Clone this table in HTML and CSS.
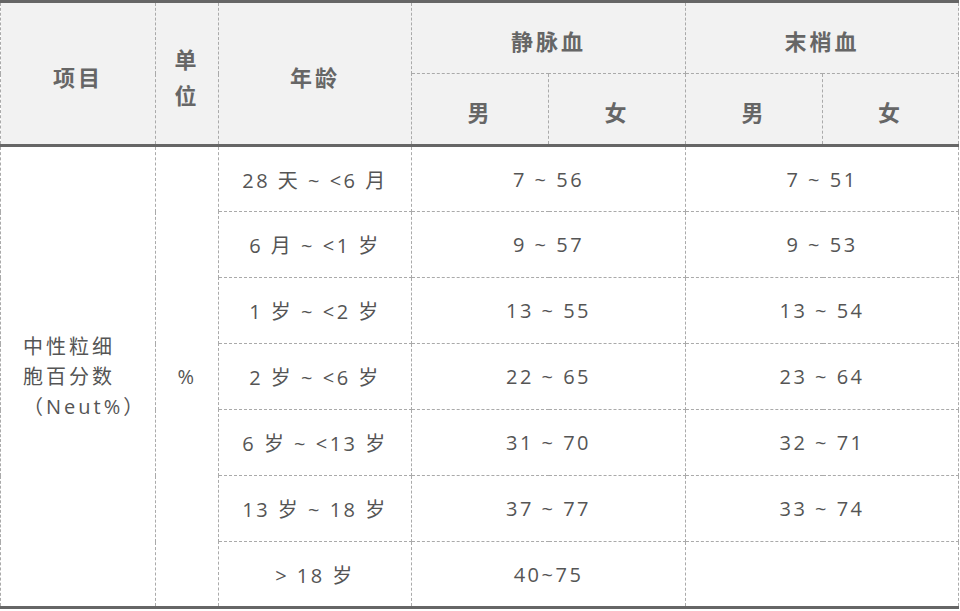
FILE: index.html
```html
<!DOCTYPE html>
<html lang="zh">
<head>
<meta charset="utf-8">
<link rel="stylesheet" href="styles.css">
</head>
<body>
<table class="ref">
  <colgroup>
    <col class="c1"><col class="c2"><col class="c3"><col class="c4"><col class="c5"><col class="c6"><col class="c7">
  </colgroup>
  <thead>
    <tr class="h1">
      <th rowspan="2">项目</th>
      <th rowspan="2" class="narrow">单<br>位</th>
      <th rowspan="2">年龄</th>
      <th colspan="2">静脉血</th>
      <th colspan="2">末梢血</th>
    </tr>
    <tr class="h2">
      <th>男</th><th>女</th><th>男</th><th>女</th>
    </tr>
  </thead>
  <tbody>
    <tr class="first">
      <td rowspan="7" class="item">中性粒细<br>胞百分数<br>（Neut%）</td>
      <td rowspan="7">%</td>
      <td>28 天 ~ &lt;6 月</td>
      <td colspan="2">7 ~ 56</td>
      <td colspan="2">7 ~ 51</td>
    </tr>
    <tr><td>6 月 ~ &lt;1 岁</td><td colspan="2">9 ~ 57</td><td colspan="2">9 ~ 53</td></tr>
    <tr><td>1 岁 ~ &lt;2 岁</td><td colspan="2">13 ~ 55</td><td colspan="2">13 ~ 54</td></tr>
    <tr><td>2 岁 ~ &lt;6 岁</td><td colspan="2">22 ~ 65</td><td colspan="2">23 ~ 64</td></tr>
    <tr><td>6 岁 ~ &lt;13 岁</td><td colspan="2">31 ~ 70</td><td colspan="2">32 ~ 71</td></tr>
    <tr><td>13 岁 ~ 18 岁</td><td colspan="2">37 ~ 77</td><td colspan="2">33 ~ 74</td></tr>
    <tr><td>&gt; 18 岁</td><td colspan="2">40~75</td><td colspan="2"></td></tr>
  </tbody>
</table>
</body>
</html>
```

FILE: styles.css
```css
html, body {
  margin: 0;
  padding: 0;
  background: #ffffff;
}
.ref {
  width: 958px;
  border-collapse: collapse;
  table-layout: fixed;
  font-family: "Open Sans", "Noto Sans CJK SC", sans-serif;
  font-size: 20px;
  color: #555555;
  border-top: 3px solid #666666;
  border-bottom: 3px solid #666666;
}
.c1 { width: 155px; }
.c2 { width: 63px; }
.c3 { width: 193px; }
.c4 { width: 137px; }
.c5 { width: 137px; }
.c6 { width: 137px; }
.c7 { width: 136px; }
.ref th, .ref td {
  border: 1px dashed #aaaaaa;
  text-align: center;
  vertical-align: middle;
  padding: 0;
  letter-spacing: 2.5px;
}
.ref th {
  background: #f2f2f2;
  color: #666666;
  font-family: "Noto Sans CJK SC", sans-serif;
  font-weight: bold;
  font-size: 22px;
  letter-spacing: 3px;
  line-height: 36px;
  padding-top: 4px;
}
.ref thead tr.h1 { height: 72px; }
.ref thead tr.h2 { height: 72px; }
.ref tbody tr.first td { border-top: 3px solid #666666; }
.ref tbody tr { height: 66px; }
.ref td.item {
  text-align: left;
  padding-left: 22px;
  line-height: 30px;
  letter-spacing: 3px;
}
```
